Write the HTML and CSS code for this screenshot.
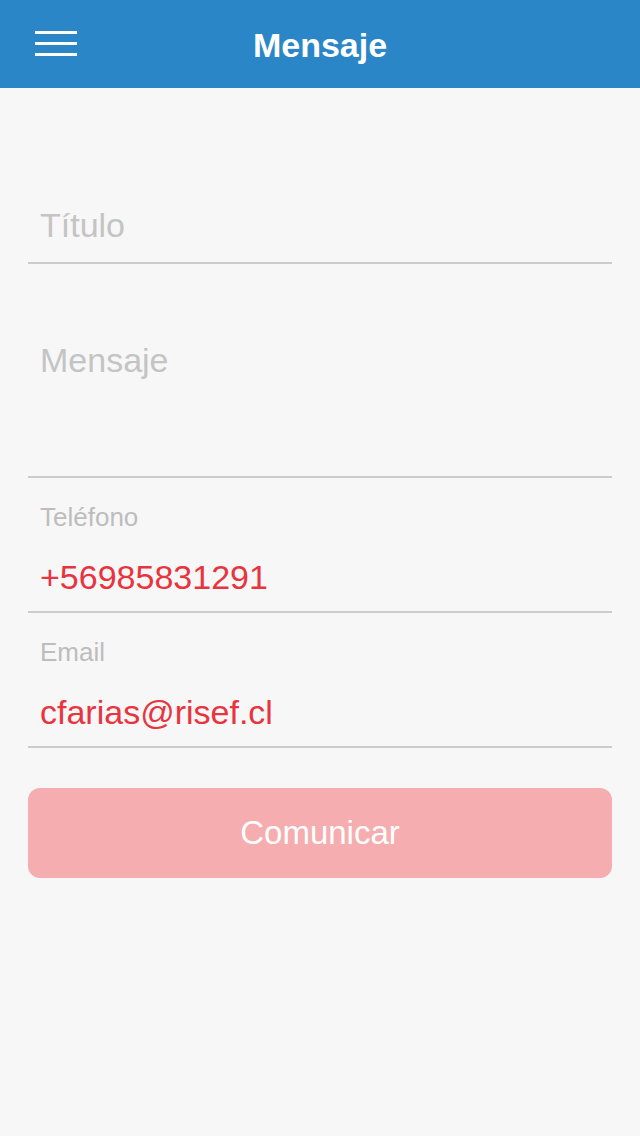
FILE: index.html
```html
<!DOCTYPE html>
<html lang="es">
<head>
  <meta charset="UTF-8">
  <title>Mensaje</title>
  <link rel="stylesheet" href="styles.css">
</head>
<body>
<!-- barra superior -->
<div class="topbar">
  <div class="menu-btn">
    <span></span>
    <span></span>
    <span></span>
  </div>
  <h1>Mensaje</h1>
</div>

<!-- formulario -->
<div class="form">
  <div class="field field-title">
    <div class="placeholder">Título</div>
  </div>
  <div class="field field-message">
    <div class="placeholder">Mensaje</div>
  </div>
  <div class="field field-labeled">
    <div class="label">Teléfono</div>
    <div class="value">+56985831291</div>
  </div>
  <div class="field field-labeled">
    <div class="label">Email</div>
    <div class="value">cfarias@risef.cl</div>
  </div>
  <button class="submit">Comunicar</button>
</div>
</body>
</html>
```

FILE: styles.css
```css
body {
  margin: 0;
  font-family: "Liberation Sans", Arial, sans-serif;
  background-color: #f7f7f7;
  width: 640px;
  height: 1136px;
}
.topbar {
  height: 88px;
  background-color: #2b86c7;
  display: flex;
  align-items: center;
  justify-content: center;
  position: relative;
}
.topbar h1 {
  margin: 0;
  color: #fff;
  font-size: 34px;
  font-weight: bold;
  line-height: 40px;
  padding-top: 2px;
}
.menu-btn {
  position: absolute;
  left: 35px;
  top: 31px;
  width: 42px;
  display: flex;
  flex-direction: column;
  gap: 8px;
}
.menu-btn span {
  display: block;
  height: 3px;
  background-color: #fff;
}
.form {
  padding: 117px 28px 0;
}
.field {
  border-bottom: 2px solid #cccccc;
  padding: 0 12px;
}
.placeholder {
  font-size: 34px;
  line-height: 40px;
  color: #c4c4c4;
}
.field-title {
  padding-bottom: 17px;
}
.field-message {
  padding-top: 76px;
  padding-bottom: 96px;
}
.field-labeled {
  padding-top: 24px;
  padding-bottom: 14px;
}
.label {
  font-size: 26px;
  line-height: 30px;
  color: #bdbdbd;
}
.value {
  margin-top: 25px;
  font-size: 34px;
  line-height: 40px;
  color: #e8343e;
}
.submit {
  display: block;
  width: 100%;
  height: 90px;
  margin-top: 40px;
  border: none;
  border-radius: 12px;
  background-color: #f6adb0;
  color: #fff;
  font-family: "Liberation Sans", Arial, sans-serif;
  font-size: 33px;
  padding: 0;
}
```
